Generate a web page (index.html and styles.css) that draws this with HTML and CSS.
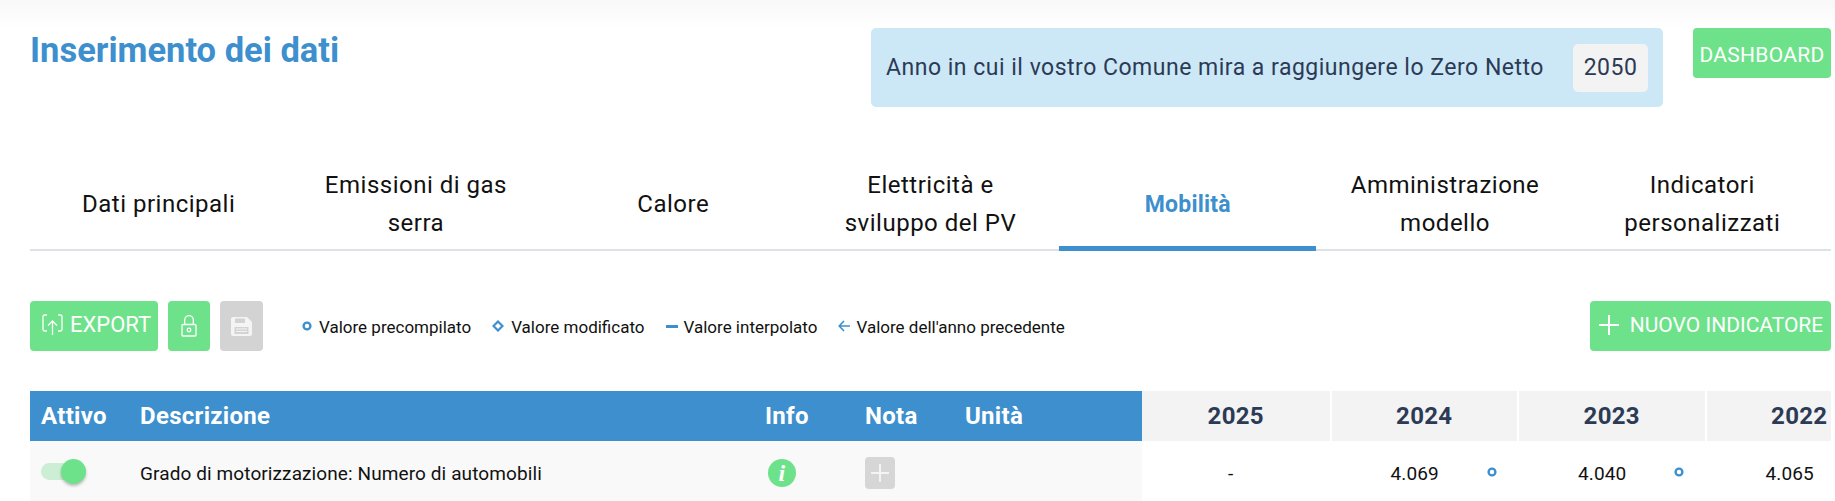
FILE: index.html
```html
<!DOCTYPE html>
<html lang="it">
<head>
	<meta charset="UTF-8">
	<title>Inserimento dei dati</title>
	<link rel="stylesheet" href="styles.css">
</head>
<body>
	<div class="topbar"></div>
	<div class="page">
		<div class="head">
			<h1 class="title">Inserimento dei dati</h1>
			<div class="target">
				<span>Anno in cui il vostro Comune mira a raggiungere lo Zero Netto</span>
				<span class="target-year">2050</span>
			</div>
			<a class="btn btn-dashboard" href="#">DASHBOARD</a>
		</div>

		<ul class="tabs">
			<li class="tab">Dati principali</li>
			<li class="tab">Emissioni di gas serra</li>
			<li class="tab">Calore</li>
			<li class="tab">Elettricità e sviluppo del PV</li>
			<li class="tab active">Mobilità</li>
			<li class="tab">Amministrazione modello</li>
			<li class="tab">Indicatori personalizzati</li>
		</ul>

		<div class="toolbar">
			<a class="btn btn-export" href="#">
				<svg width="21" height="22" viewBox="0 0 21 22" fill="none" stroke="#fff" stroke-width="1.3">
					<path d="M5 1H2.500A1.500 1.500 0 0 0 1 2.500V15.500A1.500 1.500 0 0 0 2.500 17H5M16 1H18.500A1.500 1.500 0 0 1 20 2.500V15.500A1.500 1.500 0 0 1 18.500 17H16"/>
					<path d="M10.500 21V7M6 11.500L10.500 7L15 11.500"/>
				</svg>
				EXPORT
			</a>
			<a class="btn btn-icon" href="#">
				<svg width="16" height="22" viewBox="0 0 16 22" fill="none" stroke="#fff" stroke-width="1.300">
					<path d="M3.700 9.500V5A4.300 4.300 0 0 1 12.300 5V9.500"/>
					<rect x="1" y="9.500" width="14" height="11.500" rx="1"/>
					<circle cx="8" cy="15" r="1.800"/>
				</svg>
			</a>
			<a class="btn btn-icon btn-off" href="#">
				<svg width="21" height="19" viewBox="0 0 21 19">
					<path fill="#f4f4f4" d="M2 0H16L21 5V17A2 2 0 0 1 19 19H2A2 2 0 0 1 0 17V2A2 2 0 0 1 2 0Z"/>
					<rect x="4" y="1.500" width="10" height="4.500" fill="#d3d3d3"/>
					<rect x="3.500" y="10" width="14" height="7" fill="#d3d3d3"/>
					<path d="M5 12H16M5 14.500H16" stroke="#f4f4f4"/>
				</svg>
			</a>
			<ul class="legend">
				<li class="legend-item">
					<svg class="mark" width="10" height="10" viewBox="0 0 10 10"><circle cx="5" cy="5" r="3.400" fill="none" stroke="#3d8fce" stroke-width="2.400"/></svg>
					Valore precompilato
				</li>
				<li class="legend-item">
					<svg class="mark" width="12" height="12" viewBox="0 0 12 12"><path d="M6 1.500L10.500 6L6 10.500L1.500 6Z" fill="none" stroke="#3d8fce" stroke-width="2.200"/></svg>
					Valore modificato
				</li>
				<li class="legend-item">
					<svg class="mark mark-short" width="12" height="3" viewBox="0 0 12 3"><rect width="12" height="3" fill="#3d8fce"/></svg>
					Valore interpolato
				</li>
				<li class="legend-item">
					<svg class="mark mark-short" width="12" height="12" viewBox="0 0 12 12" fill="none" stroke="#3d8fce" stroke-width="1.600"><path d="M12 6H1.500M6 1L1.200 6L6 11"/></svg>
					Valore dell'anno precedente
				</li>
			</ul>
			<a class="btn btn-new" href="#">
				<svg width="20" height="20" viewBox="0 0 20 20" stroke="#fff" stroke-width="2"><path d="M10 0V20M0 10H20"/></svg>
				NUOVO INDICATORE
			</a>
		</div>

		<div class="table">
			<div class="row row-head">
				<div class="cell c-active">Attivo</div>
				<div class="cell c-desc">Descrizione</div>
				<div class="cell c-info">Info</div>
				<div class="cell c-note">Nota</div>
				<div class="cell c-unit">Unità</div>
				<div class="cell year">2025</div>
				<div class="cell year">2024</div>
				<div class="cell year">2023</div>
				<div class="cell year">2022</div>
			</div>
			<div class="row row-body">
				<div class="cell c-active">
					<span class="toggle"><span class="toggle-knob"></span></span>
				</div>
				<div class="cell c-desc">Grado di motorizzazione: Numero di automobili</div>
				<div class="cell c-info"><span class="info-icon">i</span></div>
				<div class="cell c-note">
					<span class="note-btn">
						<svg width="18" height="18" viewBox="0 0 18 18" stroke="#f4f4f4" stroke-width="2"><path d="M9 0V18M0 9H18"/></svg>
					</span>
				</div>
				<div class="cell c-unit"></div>
				<div class="cell value value-empty">-</div>
				<div class="cell value">4.069<svg class="dot" width="10" height="10" viewBox="0 0 10 10"><circle cx="5" cy="5" r="3.400" fill="none" stroke="#3d8fce" stroke-width="2.400"/></svg></div>
				<div class="cell value">4.040<svg class="dot" width="10" height="10" viewBox="0 0 10 10"><circle cx="5" cy="5" r="3.400" fill="none" stroke="#3d8fce" stroke-width="2.400"/></svg></div>
				<div class="cell value">4.065</div>
			</div>
		</div>
	</div>
</body>
</html>
```

FILE: styles.css
```css
*{
	padding:0;
	margin:0;
	box-sizing:border-box;
}
html,body{
	height:501px;
	overflow:hidden;
}
body{
	background:#fff;
	font-family:"Roboto","Liberation Sans",sans-serif;
	color:#111;
}
ul{
	list-style:none;
}
a{
	text-decoration:none;
}
.topbar{
	height:28px;
	background:linear-gradient(#f8f8f8,#fff);
}
.page{
	padding:0 4px 0 30px;
}
.head{
	display:flex;
	align-items:flex-start;
	height:79px;
}
.title{
	flex:1;
	font-size:34.500px;
	line-height:45px;
	font-weight:700;
	color:#3d8fce;
}
.target{
	width:792px;
	height:79px;
	padding:0 15px;
	display:flex;
	align-items:center;
	justify-content:space-between;
	background:#cce8f7;
	border-radius:5px;
	font-size:23px;
	letter-spacing:.5px;
	color:#2c3a55;
}
.target-year{
	width:75px;
	height:48px;
	line-height:48px;
	text-align:center;
	background:#f3f3f3;
	border-radius:5px;
}
.btn{
	display:flex;
	align-items:center;
	justify-content:center;
	height:50px;
	border-radius:4px;
	background:#6ee28a;
	color:#fff;
	font-size:21px;
}
.btn-dashboard{
	width:138px;
	margin-left:30px;
	padding-top:3px;
	letter-spacing:.3px;
}
.tabs{
	display:flex;
	margin-top:59px;
	border-bottom:2px solid #dee2e6;
}
.tab{
	flex:1;
	height:85px;
	margin-bottom:-2px;
	padding:0 30px 9px;
	display:flex;
	align-items:center;
	justify-content:center;
	text-align:center;
	font-size:24px;
	letter-spacing:.5px;
	line-height:38px;
}
.tab.active{
	border-bottom:5px solid #3d8fce;
	padding-bottom:3px;
	color:#3d8fce;
	font-size:23px;
	letter-spacing:.2px;
	font-weight:700;
}
.toolbar{
	display:flex;
	align-items:center;
	margin-top:50px;
}
.btn-export{
	width:128px;
	justify-content:flex-start;
	gap:7px;
	margin-right:10px;
	padding:0 0 3px 12px;
	font-size:22px;
}
.btn-icon{
	width:42px;
	margin-right:10px;
}
.btn-off{
	width:43px;
	background:#d3d3d3;
}
.legend{
	display:flex;
	align-items:center;
	margin:2px 0 0 29px;
	font-size:17px;
}
.legend-item{
	display:flex;
	align-items:center;
	margin-right:21px;
}
.mark{
	margin-right:7px;
	margin-top:-2px;
}
.mark-short{
	margin-right:6px;
}
.btn-new{
	width:241px;
	margin-left:auto;
	gap:11px;
	padding:0 0 3px 1px;
}
.table{
	margin-top:40px;
	overflow:hidden;
}
.row{
	display:flex;
}
.cell{
	flex:none;
	display:flex;
	align-items:center;
}
.row-head .cell{
	height:50px;
	background:#3d8fce;
	color:#fff;
	font-size:24px;
	letter-spacing:.3px;
	font-weight:700;
}
.row-body .cell{
	height:64px;
	background:#f9f9f9;
	font-size:19px;
	letter-spacing:.1px;
}
.c-active{
	width:110px;
	padding-left:11px;
}
.c-desc{
	width:625px;
}
.c-info,
.c-note{
	width:100px;
}
.c-unit{
	width:177px;
}
.row-head .year{
	width:187.500px;
	justify-content:center;
	background:#f3f3f3;
	color:#2c3a55;
}
.year + .year{
	border-left:2px solid #fff;
}
.row-body .value{
	width:187.500px;
	padding-left:61px;
	background:#fff;
}
.row-body .value-empty{
	padding-left:86px;
}
.dot{
	margin-left:48px;
	margin-top:-2px;
}
.toggle{
	position:relative;
	display:block;
	width:38px;
	height:17px;
	margin-top:-4px;
	border-radius:9px;
	background:#cbeed4;
}
.toggle-knob{
	position:absolute;
	right:-7px;
	top:-4px;
	width:25px;
	height:25px;
	border-radius:50%;
	background:#6ee28a;
	box-shadow:0 2px 3px rgba(0,0,0,.25);
}
.info-icon{
	width:28px;
	height:28px;
	border-radius:50%;
	background:#6ee28a;
	color:#fff;
	text-align:center;
	font-family:"Liberation Serif","DejaVu Serif",serif;
	font-size:24px;
	font-style:italic;
	font-weight:700;
	line-height:28px;
	margin-left:3px;
}
.note-btn{
	display:flex;
	align-items:center;
	justify-content:center;
	width:30px;
	height:32px;
	border-radius:4px;
	background:#d6d6d6;
}
```
